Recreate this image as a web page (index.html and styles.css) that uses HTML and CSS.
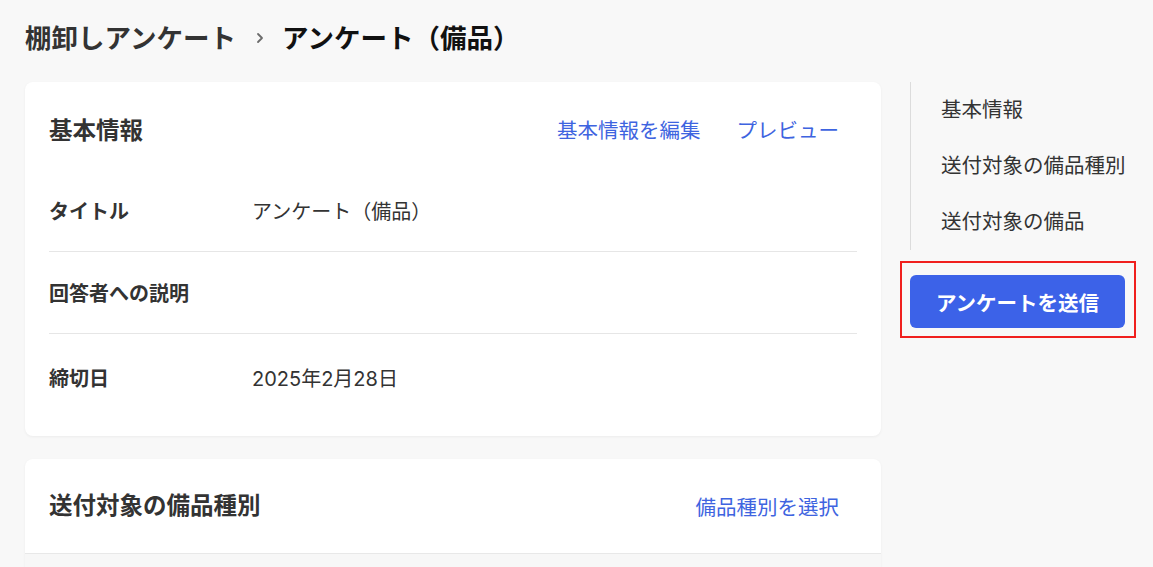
FILE: index.html
```html
<!DOCTYPE html>
<html lang="ja">
<head>
<meta charset="utf-8">
<title>アンケート（備品）</title>
<link rel="stylesheet" href="styles.css">
</head>
<body>
<div class="page">
  <h1 class="breadcrumb">
    <span class="crumb-parent">棚卸しアンケート</span>
    <svg class="crumb-sep" width="10" height="14" viewBox="0 0 10 14"><path d="M3 3 L7 7 L3 11" fill="none" stroke="#6b6b6b" stroke-width="1.8" stroke-linecap="round" stroke-linejoin="round"/></svg>
    <span class="crumb-current">アンケート（備品）</span>
  </h1>
  <div class="layout">
    <main class="main">
      <section class="card">
        <div class="card-head">
          <h2 class="card-title">基本情報</h2>
          <div class="card-actions">
            <a class="link-btn">基本情報を編集</a>
            <a class="link-btn">プレビュー</a>
          </div>
        </div>
        <div class="rows">
          <div class="row"><div class="row-label">タイトル</div><div class="row-value">アンケート（備品）</div></div>
          <div class="row"><div class="row-label">回答者への説明</div><div class="row-value"></div></div>
          <div class="row"><div class="row-label">締切日</div><div class="row-value">2025年2月28日</div></div>
        </div>
      </section>
      <section class="card card-table">
        <div class="card-head card-head-bordered">
          <h2 class="card-title">送付対象の備品種別</h2>
          <div class="card-actions">
            <a class="link-btn">備品種別を選択</a>
          </div>
        </div>
        <div class="table-head"></div>
      </section>
    </main>
    <aside class="side">
      <nav class="toc">
        <a class="toc-item">基本情報</a>
        <a class="toc-item">送付対象の備品種別</a>
        <a class="toc-item">送付対象の備品</a>
      </nav>
      <div class="submit-wrap">
        <button class="submit-btn">アンケートを送信</button>
      </div>
    </aside>
  </div>
</div>
</body>
</html>
```

FILE: styles.css
```css
* { box-sizing: border-box; }
html, body { margin: 0; padding: 0; }
body {
  background: #f8f8f8;
  font-family: "Inter", "Noto Sans CJK JP", "Noto Sans", sans-serif;
  color: #333;
  overflow: hidden;
}
.page {
  padding: 20px 28px 0 25px;
}
.breadcrumb {
  margin: 0;
  height: 36px;
  display: flex;
  align-items: center;
  font-size: 26.5px;
  font-weight: 700;
  line-height: 36px;
}
.crumb-parent { color: #333; }
.crumb-sep { margin: 0 17px 0 19px; }
.crumb-current { color: #111; }

.layout {
  margin-top: 26px;
  display: flex;
  gap: 29px;
  align-items: flex-start;
}
.main {
  width: 856px;
  display: flex;
  flex-direction: column;
  gap: 23px;
}
.card {
  background: #fff;
  border-radius: 8px;
  box-shadow: 0 1px 3px rgba(0,0,0,0.05);
  padding: 24px 24px 16px;
}
.card-head {
  height: 46px;
  display: flex;
  align-items: center;
  justify-content: space-between;
  margin-bottom: 18px;
}
.card-title {
  margin: 0;
  font-size: 23.5px;
  font-weight: 700;
  color: #333;
}
.card-actions { display: flex; }
.link-btn {
  padding: 0 18px;
  font-size: 20.5px;
  color: #3e64e0;
  cursor: pointer;
}
.rows { display: flex; flex-direction: column; }
.row {
  height: 82px;
  display: flex;
  align-items: center;
  border-bottom: 1px solid #e6e6e6;
  font-size: 20px;
}
.row:last-child { border-bottom: none; height: 86px; }
.row-label {
  width: 203px;
  font-weight: 700;
  color: #333;
}
.row-value { color: #333; }

.card-table {
  padding: 0;
  overflow: hidden;
}
.card-head-bordered {
  height: auto;
  margin: 0;
  padding: 24px 24px 24px;
  border-bottom: 1px solid #e8e8e8;
}
.card-head-bordered .card-title { line-height: 46px; }
.table-head {
  height: 40px;
  background: #f7f7f7;
}

.side {
  width: 215px;
  display: flex;
  flex-direction: column;
}
.toc {
  border-left: 1px solid #dcdcdc;
  display: flex;
  flex-direction: column;
}
.toc-item {
  height: 56px;
  line-height: 56px;
  padding-left: 30px;
  font-size: 20.5px;
  color: #333;
  white-space: nowrap;
}
.submit-wrap {
  position: relative;
  margin-top: 25px;
}
.submit-wrap::after {
  content: "";
  position: absolute;
  top: -14px;
  bottom: -10px;
  left: -10px;
  right: -11px;
  border: 2px solid #f0201e;
  pointer-events: none;
}
.submit-btn {
  width: 100%;
  height: 53px;
  border: none;
  border-radius: 6px;
  background: #3c62e8;
  color: #fff;
  font-family: inherit;
  font-size: 20.5px;
  font-weight: 700;
}
```
